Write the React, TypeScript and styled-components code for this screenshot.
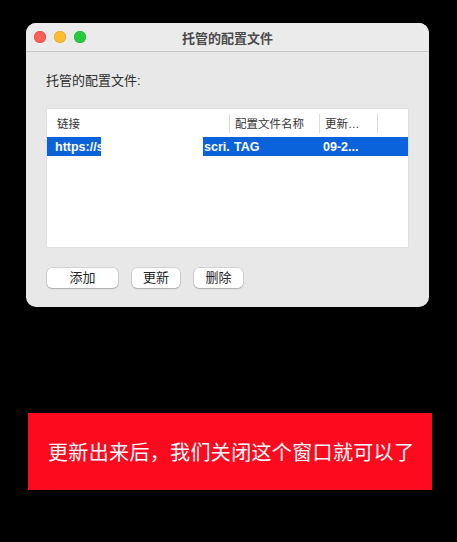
import React from "react";
import styled, { createGlobalStyle } from "styled-components";

const GlobalStyle = createGlobalStyle`
  html, body {
    margin: 0;
    padding: 0;
    background: #000;
  }
  body {
    font-family: "Liberation Sans", "Noto Sans CJK SC", sans-serif;
    -webkit-font-smoothing: antialiased;
  }
`;

const cjk = `"Liberation Sans", "Noto Sans CJK SC", sans-serif`;

const S = {
  Page: styled.div`
    width: 457px;
    height: 542px;
    padding-top: 23px;
    box-sizing: border-box;
    display: flex;
    flex-direction: column;
  `,
  Window: styled.div`
    margin-left: 26px;
    width: 403px;
    height: 284px;
    border-radius: 10px;
    background: #e8e8e8;
    overflow: hidden;
    display: flex;
    flex-direction: column;
  `,
  TitleBar: styled.div`
    height: 28px;
    flex-shrink: 0;
    background: #ebebeb;
    border-bottom: 1px solid #c6c6c6;
    display: flex;
    align-items: center;
    position: relative;
    padding-left: 8px;
  `,
  Lights: styled.div`
    display: flex;
    gap: 8px;
  `,
  Light: styled.span<{ $color: string; $edge: string }>`
    width: 12px;
    height: 12px;
    border-radius: 50%;
    background: ${({ $color }) => $color};
    box-shadow: inset 0 0 0 0.5px ${({ $edge }) => $edge};
  `,
  Title: styled.div`
    position: absolute;
    left: 0;
    right: 0;
    text-align: center;
    font-family: ${cjk};
    font-size: 13px;
    font-weight: 700;
    color: #4b4b4b;
    pointer-events: none;
  `,
  Body: styled.div`
    padding: 20px 21px 19px;
    display: flex;
    flex-direction: column;
  `,
  Label: styled.div`
    margin-left: -1px;
    line-height: 17px;
    font-family: ${cjk};
    font-size: 13px;
    color: #2e2e2e;
  `,
  Table: styled.div`
    margin-top: 20px;
    height: 138px;
    background: #fff;
    box-shadow: 0 0 0 0.5px #d6d6d6;
    display: flex;
    flex-direction: column;
  `,
  Header: styled.div`
    height: 28px;
    display: grid;
    grid-template-columns: 183px 90px 58px 1fr;
    align-items: center;
  `,
  HeadCell: styled.div<{ $pad: number; $sep?: boolean }>`
    height: 19px;
    display: flex;
    align-items: center;
    padding-left: ${({ $pad }) => $pad}px;
    border-right: ${({ $sep }) => ($sep ? "1px solid #dcdcdc" : "none")};
    font-family: ${cjk};
    font-size: 11.5px;
    color: #333;
    white-space: nowrap;
    overflow: hidden;
  `,
  Row: styled.div`
    height: 19px;
    display: grid;
    grid-template-columns: 183px 90px 58px 1fr;
    background: #0b63dc;
  `,
  LinkCell: styled.div`
    display: flex;
    height: 100%;
  `,
  Segment: styled.div<{ $width: number; $pad: number }>`
    width: ${({ $width }) => $width}px;
    flex-shrink: 0;
    padding-left: ${({ $pad }) => $pad}px;
    box-sizing: border-box;
    overflow: hidden;
    white-space: nowrap;
  `,
  Mask: styled.div`
    width: 102px;
    flex-shrink: 0;
    background: #fff;
  `,
  Cell: styled.div<{ $pad: number }>`
    padding-left: ${({ $pad }) => $pad}px;
    overflow: hidden;
    white-space: nowrap;
  `,
  RowText: styled.span`
    font-family: "Liberation Sans", sans-serif;
    font-size: 12.5px;
    font-weight: 700;
    color: #fff;
    line-height: 19px;
  `,
  Buttons: styled.div`
    margin-top: 21px;
    display: flex;
    gap: 14px;
  `,
  Button: styled.button<{ $width: number }>`
    width: ${({ $width }) => $width}px;
    height: 20px;
    padding: 0;
    border: none;
    border-radius: 5px;
    background: #fff;
    box-shadow: 0 0 0 0.5px rgba(0, 0, 0, 0.18), 0 1px 1.5px rgba(0, 0, 0, 0.18);
    font-family: ${cjk};
    font-size: 13px;
    color: #262626;
    line-height: 20px;
  `,
  Banner: styled.div`
    margin-top: 106px;
    margin-left: 28px;
    width: 404px;
    height: 77px;
    background: #fe0a1f;
    display: flex;
    align-items: center;
    padding-left: 20px;
    box-sizing: border-box;
    font-family: "Noto Sans CJK SC", sans-serif;
    font-size: 20px;
    letter-spacing: 0.35px;
    color: #fff;
    white-space: nowrap;
  `,
};

export default function App() {
  return (
    <>
      <GlobalStyle />
      <S.Page>
        <S.Window>
          <S.TitleBar>
            <S.Lights>
              <S.Light $color="#ff5f57" $edge="#e0443e" />
              <S.Light $color="#febc2e" $edge="#dea123" />
              <S.Light $color="#28c840" $edge="#1aab29" />
            </S.Lights>
            <S.Title>托管的配置文件</S.Title>
          </S.TitleBar>
          <S.Body>
            <S.Label>托管的配置文件:</S.Label>
            <S.Table>
              <S.Header>
                <S.HeadCell $pad={10} $sep>链接</S.HeadCell>
                <S.HeadCell $pad={5} $sep>配置文件名称</S.HeadCell>
                <S.HeadCell $pad={5} $sep>更新…</S.HeadCell>
                <S.HeadCell $pad={5} />
              </S.Header>
              <S.Row>
                <S.LinkCell>
                  <S.Segment $width={54} $pad={8}>
                    <S.RowText>https://s</S.RowText>
                  </S.Segment>
                  <S.Mask />
                  <S.Segment $width={27} $pad={1}>
                    <S.RowText>scri.</S.RowText>
                  </S.Segment>
                </S.LinkCell>
                <S.Cell $pad={4}>
                  <S.RowText>TAG</S.RowText>
                </S.Cell>
                <S.Cell $pad={3}>
                  <S.RowText>09-2...</S.RowText>
                </S.Cell>
                <S.Cell $pad={0} />
              </S.Row>
            </S.Table>
            <S.Buttons>
              <S.Button $width={71}>添加</S.Button>
              <S.Button $width={48}>更新</S.Button>
              <S.Button $width={49}>删除</S.Button>
            </S.Buttons>
          </S.Body>
        </S.Window>
        <S.Banner>更新出来后，我们关闭这个窗口就可以了</S.Banner>
      </S.Page>
    </>
  );
}
